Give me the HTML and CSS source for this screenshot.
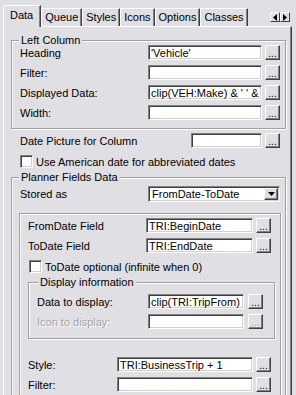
FILE: index.html
```html
<!DOCTYPE html>
<html lang="en">
<head>
  <meta charset="UTF-8">
  <title>Column Properties</title>
  <link rel="stylesheet" href="styles.css">
</head>
<body>

<div class="tabbar">
  <div class="tabs">
    <span class="tab active">Data</span>
    <span class="tab">Queue</span>
    <span class="tab">Styles</span>
    <span class="tab">Icons</span>
    <span class="tab">Options</span>
    <span class="tab">Classes</span>
  </div>
  <div class="scroller">
    <span class="arrow"><svg width="6" height="7" viewBox="0 0 6 7"><path d="M5 0V7L1 3.5Z" fill="#000"/></svg></span>
    <span class="arrow"><svg width="6" height="7" viewBox="0 0 6 7"><path d="M1 0V7L5 3.5Z" fill="#000"/></svg></span>
  </div>
</div>

<div class="panel">
  <!-- Left Column -->
  <fieldset class="group">
    <legend>Left Column</legend>
    <div class="row first"><span class="lbl">Heading</span><input class="field" value="'Vehicle'"><button class="btn">...</button></div>
    <div class="row"><span class="lbl">Filter:</span><input class="field" value=""><button class="btn">...</button></div>
    <div class="row"><span class="lbl">Displayed Data:</span><input class="field" value="clip(VEH:Make) &amp; ' ' &amp;"><button class="btn">...</button></div>
    <div class="row"><span class="lbl">Width:</span><input class="field" value=""><button class="btn">...</button></div>
  </fieldset>

  <div class="row date-row"><span class="lbl">Date Picture for Column</span><input class="field" value=""><button class="btn">...</button></div>
  <div class="check top-check"><span class="box"></span>Use American date for abbreviated dates</div>

  <!-- Planner Fields Data -->
  <fieldset class="group planner">
    <legend>Planner Fields Data</legend>
    <div class="row stored"><span class="lbl">Stored as</span>
      <div class="select"><span>FromDate-ToDate</span><span class="drop"><svg width="7" height="4" viewBox="0 0 7 4"><path d="M0 0H7L3.5 4Z" fill="#000"/></svg></span></div>
    </div>

    <div class="inner">
      <div class="row first"><span class="lbl">FromDate Field</span><input class="field" value="TRI:BeginDate"><button class="btn">...</button></div>
      <div class="row"><span class="lbl">ToDate Field</span><input class="field" value="TRI:EndDate"><button class="btn">...</button></div>
      <div class="check"><span class="box"></span>ToDate optional (infinite when 0)</div>

      <fieldset class="group display">
        <legend>Display information</legend>
        <div class="row first"><span class="lbl">Data to display:</span><input class="field" value="clip(TRI:TripFrom)"><button class="btn">...</button></div>
        <div class="row"><span class="lbl off">Icon to display:</span><input class="field" value="" disabled><button class="btn" disabled>...</button></div>
      </fieldset>

      <div class="row style-row"><span class="lbl">Style:</span><input class="field" value="TRI:BusinessTrip + 1"><button class="btn">...</button></div>
      <div class="row filter-row"><span class="lbl">Filter:</span><input class="field" value=""><button class="btn">...</button></div>
    </div>
  </fieldset>
</div>

</body>
</html>
```

FILE: styles.css
```css
body { margin: 0; width: 296px; height: 395px; overflow: hidden; background: #e0dfe3; color: #000; font: 11px "Liberation Sans", Arial, sans-serif; }

/* tab strip */
.tabbar { display: flex; height: 26px; padding-left: 3px; }
.tabs { display: flex; align-items: flex-end; }
.tab { box-sizing: border-box; height: 18px; line-height: 17px; padding: 0 3px; border-top: 1px solid #fff; border-left: 1px solid #fff; border-right: 1px solid #404040; box-shadow: inset -1px 0 #808080; white-space: nowrap; }
.tab.active { position: relative; z-index: 1; height: 22px; line-height: 19px; padding: 0 7px 0 6px; margin-bottom: -1px; background: #e0dfe3; border-top-left-radius: 2px; }
.scroller { display: flex; margin: 12px 6px 0 auto; align-self: flex-start; }
.arrow { box-sizing: border-box; width: 10px; height: 10px; display: flex; align-items: center; justify-content: center; border-top: 1px solid #fff; border-left: 1px solid #fff; border-right: 1px solid #404040; border-bottom: 1px solid #404040; }

/* page panel */
.panel { box-sizing: border-box; width: 289px; height: 369px; margin-left: 3px; overflow: hidden; border-top: 1px solid #fff; border-left: 1px solid #fff; border-right: 1px solid #404040; box-shadow: inset -1px 0 #808080; }

/* etched group boxes */
.group { margin: 8px 5px 0 7px; padding: 0 0 8px; min-width: 0; border: 1px solid #a0a0a0; box-shadow: 1px 1px 0 #fff, inset 1px 1px 0 #fff; }
.group legend { margin-left: 7px; padding: 0 2px; line-height: 10px; background: #e0dfe3; white-space: nowrap; }
.planner { margin-top: 4px; }
.inner { margin: 11px 4px 0 7px; padding: 4px 0 20px; border: 1px solid #a0a0a0; box-shadow: 1px 1px 0 #fff, inset 1px 1px 0 #fff; }
.display { margin: 4px 5px 0 8px; padding: 7px 0 9px; }
.display legend { margin-left: 9px; }

/* label + field + button rows */
.row { display: flex; align-items: center; height: 15px; margin-top: 5px; padding-left: 8px; }
.row.first { margin-top: 0; }
.lbl { flex: none; width: 128px; white-space: nowrap; overflow: hidden; }
.lbl.off { color: #a4a3a8; text-shadow: 1px 1px 0 #fff; }
.field { box-sizing: border-box; flex: none; width: 114px; height: 15px; margin: 0; padding: 0 2px; font: inherit; color: #000; background: #fff; outline: none; border-top: 1px solid #808080; border-left: 1px solid #808080; border-bottom: 1px solid #fff; border-right: 1px solid #fff; box-shadow: inset 1px 1px 0 #404040, inset -1px -1px 0 #d4d0c8; }
.field:disabled { background: #fff; }
.btn { box-sizing: border-box; flex: none; width: 15px; height: 15px; margin: 0 0 0 3px; padding: 0 0 1px; display: flex; align-items: flex-end; justify-content: center; font: 10px/8px "Liberation Sans", Arial, sans-serif; color: #000; background: #e0dfe3; border-top: 1px solid #fff; border-left: 1px solid #fff; border-right: 1px solid #404040; border-bottom: 1px solid #404040; box-shadow: inset -1px -1px 0 #808080; }
.btn:disabled { color: #a4a3a8; text-shadow: 1px 1px 0 #fff; }

.date-row { margin-top: 4px; padding-left: 16px; }
.date-row .lbl { width: 171px; }
.date-row .field { width: 71px; }

.stored { margin-top: 4px; height: 16px; }
.select { box-sizing: border-box; width: 132px; height: 16px; display: flex; align-items: center; justify-content: space-between; padding: 0 1px 0 3px; background: #fff; border-top: 1px solid #808080; border-left: 1px solid #808080; border-bottom: 1px solid #fff; border-right: 1px solid #fff; box-shadow: inset 1px 1px 0 #404040, inset -1px -1px 0 #d4d0c8; }
.drop { box-sizing: border-box; width: 14px; height: 12px; display: flex; align-items: center; justify-content: center; background: #e0dfe3; border-top: 1px solid #fff; border-left: 1px solid #fff; border-right: 1px solid #404040; border-bottom: 1px solid #404040; box-shadow: inset -1px -1px 0 #808080; }

.inner .row .lbl { width: 118px; }
.inner .row .field { width: 107px; }
.display .row .lbl { width: 111px; }
.display .row .field { width: 96px; }
.display .row .btn { margin-left: 4px; }
.style-row { margin-top: 18px; }
.style-row .lbl, .filter-row .lbl { width: 89px; }
.inner .style-row .field, .inner .filter-row .field { width: 136px; }
.inner .style-row .lbl, .inner .filter-row .lbl { width: 89px; }

/* checkboxes */
.check { display: flex; align-items: center; height: 13px; margin-top: 7px; padding-left: 9px; white-space: nowrap; }
.top-check { padding-left: 16px; }
.box { box-sizing: border-box; flex: none; width: 13px; height: 13px; margin-right: 3px; background: #fff; border-top: 1px solid #808080; border-left: 1px solid #808080; border-bottom: 1px solid #fff; border-right: 1px solid #fff; box-shadow: inset 1px 1px 0 #404040, inset -1px -1px 0 #d4d0c8; }
```
